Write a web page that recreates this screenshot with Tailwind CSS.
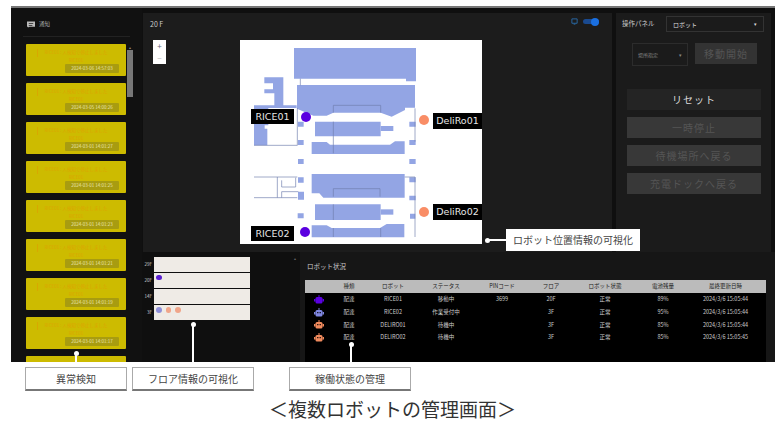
<!DOCTYPE html>
<html lang="ja">
<head>
  <meta charset="UTF-8" />
  <title>複数ロボットの管理画面</title>
  <script src="https://cdn.jsdelivr.net/npm/@tailwindcss/browser@4"></script>
</head>
<body class="bg-white font-['Noto_Sans_CJK_JP','Noto_Sans',sans-serif] w-[782px] h-[425px] overflow-hidden relative">

  <!-- screenshot frame -->
  <div class="pt-[6px] pl-[11px]">
    <div class="w-[764px] h-[356px] bg-[#0f0f0f] border-t-2 border-[#777] flex overflow-hidden text-white">

      <!-- notifications -->
      <div class="w-[131px] shrink-0 bg-[#111]">
        <div class="h-[29px] mx-[12px] pt-[5px] flex items-center gap-[4px] pl-[4px] border-b border-[#222] text-[5.5px] text-[#aaa]">
          <svg width="8" height="7" viewBox="0 0 9 7"><path d="M0 0h9v6H3L1 7V6H0z" fill="#bbb"/><path d="M2 2h5v1H2zM2 4h4v1H2z" fill="#222"/></svg>
          <span>通知</span>
        </div>
        <div class="flex mt-[7px]">
          <div id="cards" class="w-[100px] ml-[15px] flex flex-col gap-[7px] shrink-0"></div>
          <div class="w-[6px] ml-[1px] mt-[1px]">
            <div class="text-[4px] leading-[5px] text-center text-[#888]">▴</div>
            <div class="h-[47px] bg-[#777]"></div>
          </div>
        </div>
      </div>

      <!-- right side -->
      <div class="flex-1 flex flex-col min-w-0">
        <div class="h-[239px] mt-[5px] flex shrink-0">
          <!-- map -->
          <div class="w-[469px] ml-[1px] bg-[#1c1c1c] relative pt-[6px]">
            <p class="text-[7px] text-[#ccc] pl-[7px] leading-[10px]">20 F</p>
            <div class="absolute left-[10px] top-[27px] w-[13px] h-[24px] bg-white text-[#667] text-[8px] leading-[12px] text-center">+<br><span class="text-[#bbb]">−</span></div>
            <div class="absolute right-[13px] top-[5px] flex items-center gap-[5px]">
              <svg width="7" height="7" viewBox="0 0 8 8"><path d="M1 1h6v5H1zM3 7h2" fill="none" stroke="#2a6fb0" stroke-width="1"/></svg>
              <div class="w-[16px] h-[5px] rounded-full bg-[#1a4a90] relative"><div class="absolute right-0 top-[-1.5px] w-[8px] h-[8px] rounded-full bg-[#1a6fe0]"></div></div>
            </div>
            <!-- floor map -->
            <div class="absolute left-[97px] top-[27px] w-[242px] h-[204px] bg-white">
              <svg class="absolute inset-0" width="242" height="204" viewBox="30 30 726 612">
                <g fill="#93a5e4">
                  <path d="M192 54H558V154H528V146H192z"/>
                  <path d="M201 165H555V233H525V240L485 260L452 248H310L290 257H250L201 236z"/>
                  <path d="M103 142H160V226H200V234H115V286H104V296H112V346H72V226H133V190H103V178H129V160H103z"/>
                  <path d="M255 275h197v44H255z"/>
                  <path d="M452 288h38v15h-38z"/>
                  <path d="M245 336H290L300 344H480L495 334H524V372H245z"/>
                  <path d="M204 275h17v15h-17zM204 330h17v15h-17zM538 275h19v15h-19zM538 330h19v15h-19zM204 387h17v15h-17zM538 387h19v15h-19z"/>
                  <path d="M245 432H524V503H280L268 490H245z"/>
                  <path d="M255 523h197v47H255z"/>
                  <path d="M452 538h38v16h-38z"/>
                  <path d="M245 586H290L305 594H450L470 582H523V622H245z"/>
                  <path d="M204 442h17v16h-17zM204 485h18v24h-18zM538 442h19v15h-19zM538 497h19v14h-19zM540 551h16v15h-16zM203 550h18v15h-18z"/>
                </g>
                <g fill="none" stroke="#6f7fae" stroke-width="2">
                  <path d="M72 346h130V234M211 146v20M310 248v-22h142v22M310 275v95M310 500v-24h140v24M310 523v47M310 594v27M452 594v27M555 235v100"/>
                  <path d="M72 441h130M72 503h130M142 441v62M155 451v20h42v-28M155 485v18M155 485h50"/>
                  <path d="M524 441h31v180"/>
                </g>
              </svg>
              <div class="absolute left-[11px] top-[69px] h-[15px] w-[43px] text-center bg-black text-[#e5e5e5] text-[9.5px] leading-[15px] font-['DejaVu_Sans',sans-serif]">RICE01</div>
              <div class="absolute left-[11px] top-[186px] h-[15px] w-[43px] text-center bg-black text-[#e5e5e5] text-[9.5px] leading-[15px] font-['DejaVu_Sans',sans-serif]">RICE02</div>
              <div class="absolute left-[193px] top-[73px] h-[16px] w-[49px] text-center bg-black text-[#e5e5e5] text-[9.5px] leading-[16px] font-['DejaVu_Sans',sans-serif]">DeliRo01</div>
              <div class="absolute left-[193px] top-[164px] h-[16px] w-[49px] text-center bg-black text-[#e5e5e5] text-[9.5px] leading-[16px] font-['DejaVu_Sans',sans-serif]">DeliRo02</div>
              <div class="absolute left-[61px] top-[72px] w-[10px] h-[10px] rounded-full bg-[#5a00e0]"></div>
              <div class="absolute left-[60px] top-[187px] w-[10px] h-[10px] rounded-full bg-[#5a00e0]"></div>
              <div class="absolute left-[179px] top-[75px] w-[10px] h-[10px] rounded-full bg-[#f98d66]"></div>
              <div class="absolute left-[179px] top-[167px] w-[10px] h-[10px] rounded-full bg-[#f98d66]"></div>
            </div>
          </div>
          <!-- control panel -->
          <div class="w-[155px] ml-[4px] bg-[#1b1b1b] pt-[3px]">
            <div class="flex items-center pl-[6px] gap-[8px]">
              <span class="w-[36px] text-[6.5px] text-[#ccc] whitespace-nowrap">操作パネル</span>
              <div class="w-[98px] h-[16px] border border-[#333] flex items-center justify-between px-[6px] text-[6px] text-[#ddd]">ロボット<span class="text-[5px]">▾</span></div>
            </div>
            <div class="flex items-start gap-[7px] mt-[11px] ml-[16px]">
              <div class="w-[56px] h-[23px] border border-[#2c2c2c] flex items-center justify-between px-[5px] text-[5px] text-[#888]">場所指定<span>▾</span></div>
              <div class="w-[62px] h-[21px] bg-[#333] text-[#555] text-[10px] flex items-center justify-center tracking-[1px]">移動開始</div>
            </div>
            <div class="flex flex-col gap-[7px] mt-[23px] ml-[11px] w-[134px]">
              <div class="h-[21px] bg-[#242424] text-[#ddd] text-[10px] flex items-center justify-center tracking-[1px]">リセット</div>
              <div class="h-[21px] bg-[#383838] text-[#555] text-[10px] flex items-center justify-center tracking-[1px]">一時停止</div>
              <div class="h-[21px] bg-[#383838] text-[#555] text-[10px] flex items-center justify-center tracking-[1px]">待機場所へ戻る</div>
              <div class="h-[21px] bg-[#383838] text-[#555] text-[10px] flex items-center justify-center tracking-[1px]">充電ドックへ戻る</div>
            </div>
          </div>
        </div>

        <!-- bottom -->
        <div class="flex-1 flex min-h-0">
          <!-- floors -->
          <div class="w-[158px] pt-[5px] shrink-0 bg-[#0f0f0f] relative">
            <div class="flex flex-col gap-[1px]">
              <div class="flex items-center gap-[2px]"><span class="w-[10px] text-right text-[4.5px] text-[#ccc]">29F</span><div class="w-[96px] h-[15px] bg-[#efebe6]"></div></div>
              <div class="flex items-center gap-[2px]"><span class="w-[10px] text-right text-[4.5px] text-[#ccc]">20F</span><div class="w-[96px] h-[15px] bg-[#efebe6] flex items-start pl-[2px] pt-[2px]"><i class="w-[6px] h-[5px] rounded-full bg-[#5a1fd0]"></i></div></div>
              <div class="flex items-center gap-[2px]"><span class="w-[10px] text-right text-[4.5px] text-[#ccc]">14F</span><div class="w-[96px] h-[15px] bg-[#efebe6]"></div></div>
              <div class="flex items-center gap-[2px]"><span class="w-[10px] text-right text-[4.5px] text-[#ccc]">3F</span><div class="w-[96px] h-[15px] bg-[#efebe6] flex items-start gap-[4px] pl-[2px] pt-[2px]"><i class="w-[5.5px] h-[5.5px] rounded-full bg-[#8f8fd8]"></i><i class="w-[5.5px] h-[5.5px] rounded-full bg-[#f0a58a]"></i><i class="w-[5.5px] h-[5.5px] rounded-full bg-[#f0a58a]"></i></div></div>
            </div>
            <span class="absolute right-[4px] top-[3px] text-[4px] text-[#666]">▴</span>
          </div>
          <!-- robot status -->
          <div class="flex-1 bg-[#161616] pl-[5px]">
            <p class="text-[6.5px] text-[#ccc] h-[28px] leading-[28px] pl-[2px]">ロボット状況</p>
            <div id="robots" class="w-[461px] h-[82px] bg-black text-[5.5px] text-[#ccc]">
              <div class="grid grid-cols-[28px_32px_56px_50px_62px_36px_72px_44px_81px] h-[13px] bg-[#bbb] text-[#222] items-center text-center whitespace-nowrap">
                <span></span><span>種類</span><span>ロボット</span><span>ステータス</span><span>PINコード</span><span>フロア</span><span>ロボット状態</span><span>電池残量</span><span>最終更新日時</span>
              </div>
            </div>
          </div>
        </div>
      </div>
    </div>
  </div>

  <!-- callouts -->
  <div class="flex pl-[25px] pt-[5px] text-[10px] text-[#444]">
    <div class="w-[102px] h-[24px] bg-white border border-[#aaa] border-b-2 border-b-[#777] flex items-center justify-center">異常検知</div>
    <div class="w-[122px] ml-[5px] h-[24px] bg-white border border-[#aaa] border-b-2 border-b-[#777] flex items-center justify-center">フロア情報の可視化</div>
    <div class="w-[122px] ml-[35px] h-[24px] bg-white border border-[#aaa] border-b-2 border-b-[#777] flex items-center justify-center">稼働状態の管理</div>
  </div>
  <p class="pl-[269px] text-[19px] leading-[26px] text-[#333] mt-[5px] whitespace-nowrap">＜複数ロボットの管理画面＞</p>

  <!-- leader lines -->
  <div class="absolute left-[75px] top-[353px] w-[2px] h-[14px] bg-white"></div>
  <div class="absolute left-[73.5px] top-[351px] w-[5px] h-[5px] rounded-full bg-white"></div>
  <div class="absolute left-[192px] top-[324px] w-[2px] h-[43px] bg-white"></div>
  <div class="absolute left-[190.5px] top-[322px] w-[5px] h-[5px] rounded-full bg-white"></div>
  <div class="absolute left-[350px] top-[345px] w-[2px] h-[22px] bg-white"></div>
  <div class="absolute left-[348.5px] top-[342px] w-[5px] h-[5px] rounded-full bg-white"></div>
  <div class="absolute left-[487px] top-[239px] w-[20px] h-[2px] bg-white"></div>
  <div class="absolute left-[485px] top-[237.5px] w-[5px] h-[5px] rounded-full bg-white"></div>
  <div class="absolute left-[506px] top-[229px] w-[134px] h-[22px] bg-white text-[10px] leading-[22px] text-center text-[#444]">ロボット位置情報の可視化</div>

  <script>
    const times = ["2024-03-06 14:57:03", "2024-03-05 14:00:26", "2024-03-01 14:01:27", "2024-03-01 14:01:25",
      "2024-03-01 14:01:23", "2024-03-01 14:01:21", "2024-03-01 14:01:19", "2024-03-01 14:01:17"];
    document.getElementById("cards").innerHTML = times.map(t => `
      <div class="h-[32px] rounded-[1px] bg-[#cdbb00] relative text-[#dca400] text-[4.5px] text-center pt-[4px] leading-[8px] whitespace-nowrap">
        <i class="absolute left-[11px] top-[5px] w-[1px] h-[8px] bg-[#d8a800]"></i>
        RICE01 : 人検知で停止しました<br>RICE01
        <span class="absolute right-[7px] bottom-[3px] w-[54px] h-[9px] rounded-[1px] bg-[#a89c10] text-[#e8e4b0] text-[4.5px] leading-[9px]">${t}</span>
      </div>`).join("") + `<div class="h-[32px] rounded-[1px] bg-[#cdbb00] shrink-0"></div>`;

    const robots = [
      { color: "#5a00e0", eye: "#5a00e0", name: "RICE01", status: "移動中", pin: "3699", floor: "20F", battery: "89%", time: "2024/3/6 15:05:44" },
      { color: "#7f86e0", eye: "#000", name: "RICE02", status: "作業受付中", pin: "", floor: "3F", battery: "95%", time: "2024/3/6 15:05:44" },
      { color: "#f08a5d", eye: "#000", name: "DELIRO01", status: "待機中", pin: "", floor: "3F", battery: "85%", time: "2024/3/6 15:05:44" },
      { color: "#f08a5d", eye: "#000", name: "DELIRO02", status: "待機中", pin: "", floor: "3F", battery: "85%", time: "2024/3/6 15:05:45" },
    ];
    document.getElementById("robots").insertAdjacentHTML("beforeend", robots.map(r => `
      <div class="grid grid-cols-[28px_32px_56px_50px_62px_36px_72px_44px_81px] h-[12.7px] items-center text-center whitespace-nowrap">
        <span class="flex justify-center"><svg width="10" height="9" viewBox="0 0 10 9"><path d="M4.5 0h1v2h-1z" fill="${r.color}"/><rect x="1.5" y="2" width="7" height="6.5" rx="1.5" fill="${r.color}"/><path d="M0 4h1.5v2.5H0zM8.5 4H10v2.5H8.5z" fill="${r.color}"/><path d="M3.2 4h1.2v1.2H3.2zM5.6 4h1.2v1.2H5.6z" fill="${r.eye}"/></svg></span>
        <span>配達</span><span>${r.name}</span><span>${r.status}</span><span>${r.pin}</span><span>${r.floor}</span><span>正常</span><span>${r.battery}</span><span>${r.time}</span>
      </div>`).join(""));
  </script>
</body>
</html>
